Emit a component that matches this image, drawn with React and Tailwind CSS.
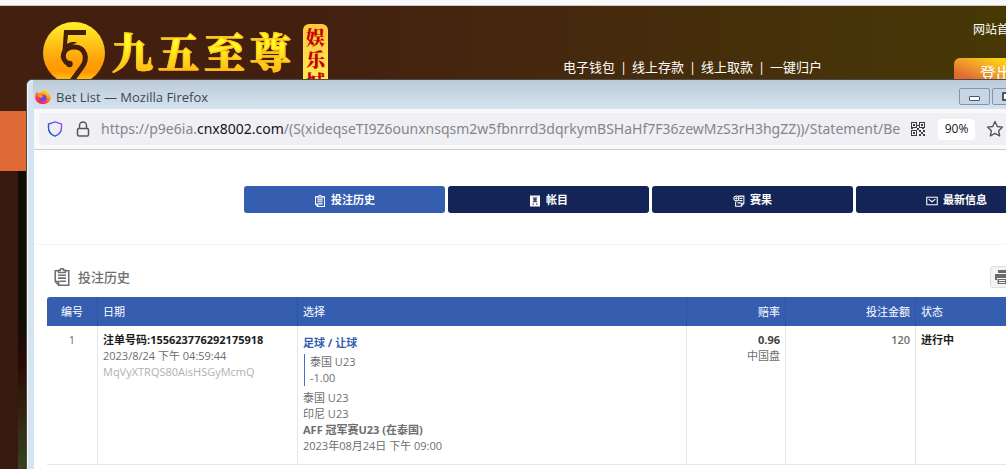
import React from "react";

const navTabs = [
    { label: "投注历史", icon: "clipboard", active: true },
    { label: "帐目", icon: "book" },
    { label: "赛果", icon: "result" },
    { label: "最新信息", icon: "mail" },
];

const bets = [
    {
        no: 1,
        ticket: "注单号码:155623776292175918",
        time: "2023/8/24 下午 04:59:44",
        code: "MqVyXTRQS80AisHSGyMcmQ",
        type: "足球 / 让球",
        pick: "泰国 U23",
        handicap: "-1.00",
        home: "泰国 U23",
        away: "印尼 U23",
        league: "AFF 冠军赛U23 (在泰国)",
        kickoff: "2023年08月24日 下午 09:00",
        odds: "0.96",
        oddsType: "中国盘",
        stake: "120",
        status: "进行中",
    },
];

// gold circle with the 5 and the 9 interlocked
function LogoMark() {
    return (
        <svg viewBox="0 0 64 64" className="w-16 h-16 shrink-0" aria-hidden="true">
            <defs>
                <linearGradient id="gold" x1="0" y1="0" x2="0" y2="1">
                    <stop offset="0" stopColor="#fff22a" />
                    <stop offset="0.6" stopColor="#ffa30a" />
                    <stop offset="0.8" stopColor="#ff9800" />
                    <stop offset="1" stopColor="#ffd820" />
                </linearGradient>
            </defs>
            <circle cx="32" cy="32" r="31" fill="url(#gold)" />
            <path d="M22 9H44V14H26L25 23C28 21 32 20.500 35 21.500L30 24C26 24.500 23 27 20.500 30Z" fill="#431f10" />
            <path d="M27 43C17 38 21 26 32 26C44 26 46 38 40 46L29 61" fill="none" stroke="#431f10" strokeWidth="5" />
            <circle cx="27.500" cy="43" r="3.200" fill="#431f10" />
        </svg>
    );
}

function FirefoxIcon() {
    return (
        <svg viewBox="0 0 16 16" className="w-4 h-4 mt-1 shrink-0" aria-hidden="true">
            <defs>
                <linearGradient id="fox" x1="0.8" y1="0" x2="0.2" y2="1">
                    <stop offset="0" stopColor="#fff44f" />
                    <stop offset="0.4" stopColor="#ff980e" />
                    <stop offset="0.75" stopColor="#ff3647" />
                    <stop offset="1" stopColor="#e31587" />
                </linearGradient>
            </defs>
            <path d="M10 0C12 1.500 13 3 13.500 4.500C15 5.500 16 8 15.600 10A8 7.500 0 0 1 0.400 10C0 7 0.500 4.500 2 2.500L3 4.500C4 3.800 5 3.500 6 3.600C7 1.500 9 2 10 0Z" fill="url(#fox)" />
            <circle cx="8" cy="9" r="3.600" fill="#7542e5" />
            <path d="M3 5.500C5 4.500 6 5 7 6.500H9C8 8 6.500 7.500 6.500 9C5 9 3.500 8 3 5.500Z" fill="#ff980e" />
        </svg>
    );
}

function Icon({ name, className }) {
    return (
        <svg viewBox="0 0 16 16" className={className} fill="none" stroke="currentColor" strokeWidth="1.4" aria-hidden="true">
            {name === "clipboard" && (
                <>
                    <path d="M4.500 2.500H2V12L5 15.300H14V2.500H11.500" />
                    <path d="M5 2H6.500L7 0.700H9L9.500 2H11V4H5Z" />
                    <path d="M4.500 6.500H11.500M4.500 9H11.500M6 11.800H11.500M2.500 12H5V15" />
                </>
            )}
            {name === "book" && (
                <>
                    <path d="M2 1.500H14V14.500H2Z" fill="currentColor" />
                    <path d="M5 4H11M8 4V8M5.500 6.500H10.500M5 9H11M6 11.500L5 13M10 11.500L11 13" stroke="#142456" />
                </>
            )}
            {name === "result" && (
                <>
                    <path d="M7 1.500H14.500V11L11 15H3.500V9" />
                    <circle cx="4.500" cy="4.500" r="3.300" />
                    <path d="M9 4.500H12.500M8.500 7.500H12.500M6 10.500H10M11 15V11H14.500M3 4.500H6M4.500 3V6" />
                </>
            )}
            {name === "mail" && (
                <>
                    <path d="M1 3H15V13H1Z" />
                    <path d="M3.500 5.500L8 9L12.500 5.500" />
                </>
            )}
        </svg>
    );
}

function QrIcon() {
    return (
        <svg viewBox="0 0 14 14" className="w-[14px] h-[14px] shrink-0" fill="#3b3b43" aria-hidden="true">
            <path fillRule="evenodd" d="M0 0H6V6H0ZM1 1V5H5V1ZM8 0H14V6H8ZM9 1V5H13V1ZM0 8H6V14H0ZM1 9V13H5V9Z" />
            <path d="M2 2H4V4H2ZM10 2H12V4H10ZM2 10H4V12H2ZM8 8H10V10H8ZM12 8H14V10H12ZM10 10H12V12H10ZM8 12H10V14H8ZM12 12H14V14H12ZM6 3H8V4H6ZM6 6H8V8H6ZM0 6H2V7H0ZM11 6H13V7H11Z" />
        </svg>
    );
}

function SiteHeader() {
    const links = ["电子钱包", "线上存款", "线上取款", "一键归户"];
    return (
        <header className="h-[105px] flex items-start pl-[42px] text-white bg-linear-to-r from-[#431f10] from-30% to-[#473805]">
            <div className="flex pt-[15px]">
                <LogoMark />
                <h1 className="flex gap-[5px] ml-[6px] mt-[7px] text-[41px] leading-[46px] font-black font-['Noto_Serif_CJK_SC','Noto_Sans_CJK_SC',sans-serif] [-webkit-text-stroke:1px_#ffc01a] bg-linear-to-b from-[#ffff25] from-20% to-[#ff9000] to-80% bg-clip-text text-transparent">
                    {"九五至尊".split("").map((c) => <span key={c}>{c}</span>)}
                </h1>
                <div className="w-[25px] ml-3 mt-[3px] h-20 pt-[2px] rounded-md text-center text-[19px] leading-[22px] font-black font-['Noto_Serif_CJK_SC','Noto_Sans_CJK_SC',sans-serif] text-[#c40000] bg-linear-to-b from-[#ffc83c] to-[#fff860]">
                    娱乐城
                </div>
            </div>
            <nav className="ml-auto mr-[132px] mt-[52px] flex text-[13px] leading-[18px]">
                {links.map((link, i) => (
                    <React.Fragment key={link}>
                        {i > 0 && <span className="w-[17px] text-center">|</span>}
                        <a href="#" className="whitespace-nowrap">{link}</a>
                    </React.Fragment>
                ))}
            </nav>
            <div className="-mr-7 mt-[15px] flex flex-col items-start gap-[19px]">
                <a href="#" className="ml-[19px] text-[12px] leading-[18px] whitespace-nowrap">网站首页</a>
                <button className="w-20 h-[30px] pl-1 rounded-md text-[16px] whitespace-nowrap bg-linear-to-tr from-[#e06a32] from-25% to-[#fbd010] to-75%">登出</button>
            </div>
        </header>
    );
}

function TitleBar() {
    return (
        <div className="h-[29px] flex items-center pl-[2px] bg-linear-to-b from-[#bccad8] to-[#d6e4f0]">
            <FirefoxIcon />
            <span className="ml-[5px] mt-1 text-[13px] leading-4 text-[#40474f]">Bet List — Mozilla Firefox</span>
            <div className="ml-auto mt-1 flex gap-[2px] shrink-0 -mr-[17px]">
                <button aria-label="Minimize" className="w-[31px] h-[17px] border border-[#8394b0] rounded-[2px] bg-[#c7d5e5] flex items-center justify-center">
                    <span className="w-[11px] h-[5px] mt-[3px] bg-white border border-[#4d5361] rounded-[1px]"></span>
                </button>
                <button aria-label="Maximize" className="w-[31px] h-[17px] border border-[#8394b0] rounded-[2px] bg-[#c7d5e5] flex items-center justify-center">
                    <span className="w-[11px] h-[9px] bg-white border-2 border-[#4d5361] rounded-[1px]"></span>
                </button>
            </div>
        </div>
    );
}

function AddressBar() {
    return (
        <div className="h-[41px] pl-[5px] py-1 bg-[#f9f9fb] border-b border-[#cccccc]">
            <div className="h-8 flex items-center pl-2 rounded-l bg-[#f0f0f4]">
                <svg viewBox="0 0 16 16" className="w-4 h-4 shrink-0" fill="none" strokeWidth="1.4" aria-hidden="true">
                    <defs>
                        <linearGradient id="shield" x1="1" y1="0" x2="0" y2="1">
                            <stop offset="0" stopColor="#9059ff" />
                            <stop offset="1" stopColor="#0250bb" />
                        </linearGradient>
                    </defs>
                    <path d="M8 0.900L14.500 3V6.500C14.500 10.500 12 13.800 8 15.200C4 13.800 1.500 10.500 1.500 6.500V3Z" stroke="url(#shield)" />
                </svg>
                <svg viewBox="0 0 14 16" className="w-[14px] h-4 ml-[13px] shrink-0" fill="none" stroke="#55555e" strokeWidth="1.5" aria-hidden="true">
                    <rect x="1.500" y="7.500" width="11" height="7.500" rx="1.500" />
                    <path d="M3.500 7.500V4.500A3.500 3.500 0 0 1 10.500 4.500V7.500" />
                </svg>
                <div className="ml-[11px] flex-1 min-w-0 overflow-hidden whitespace-nowrap font-['Noto_Sans',sans-serif] text-[14px] leading-5 text-[#85858c]">
                    https://p9e6ia.<span className="text-[#15141a]">cnx8002.com</span>/(S(xideqseTI9Z6ounxnsqsm2w5fbnrrd3dqrkymBSHaHf7F36zewMzS3rH3hgZZ))/Statement/Be
                </div>
                <div className="flex items-center shrink-0 pl-[7px]">
                    <QrIcon />
                    <button className="ml-[13px] w-[37px] h-[21px] rounded bg-white text-[12px] text-[#15141a]">90%</button>
                    <svg viewBox="0 0 18 18" className="w-[18px] h-[18px] ml-[11px] mr-[2px]" fill="none" stroke="#55555e" strokeWidth="1.4" strokeLinejoin="round" aria-hidden="true">
                        <path d="M9 1.500L11.300 6.500L16.500 7.100L12.600 10.700L13.700 16L9 13.300L4.300 16L5.400 10.700L1.500 7.100L6.700 6.500Z" />
                    </svg>
                </div>
            </div>
        </div>
    );
}

function BetTable() {
    const th = "h-[29px] px-[5px] font-normal border-r border-[#2e55a3]";
    const td = "px-[5px] pt-[6px] pb-[10px] align-top border-r border-b border-[#e6e6e6]";
    return (
        <table className="w-full table-fixed border-separate border-spacing-0 text-[11px] leading-4 text-[#6e6e6e]">
            <colgroup>
                <col className="w-[51px]" />
                <col className="w-[200px]" />
                <col />
                <col className="w-[99px]" />
                <col className="w-[130px]" />
                <col className="w-[102px]" />
            </colgroup>
            <thead>
                <tr className="bg-[#355eb1] text-white text-left">
                    <th className={`${th} rounded-tl-[3px] text-center`}>编号</th>
                    <th className={th}>日期</th>
                    <th className={th}>选择</th>
                    <th className={`${th} text-right`}>赔率</th>
                    <th className={`${th} text-right`}>投注金额</th>
                    <th className={th}>状态</th>
                </tr>
            </thead>
            <tbody>
                {bets.map((bet) => (
                    <tr key={bet.no}>
                        <td className={`${td} text-center`}>{bet.no}</td>
                        <td className={td}>
                            <div className="font-bold text-[#1c1c1c]">{bet.ticket}</div>
                            <div>{bet.time}</div>
                            <div className="text-[#b0b0b0]">{bet.code}</div>
                        </td>
                        <td className={td}>
                            <div className="mt-[3px] font-bold text-[#355eb1]">{bet.type}</div>
                            <div className="mt-[3px] mb-1 pl-[5px] ml-px border-l border-[#3f6fd0]">
                                <div>{bet.pick}</div>
                                <div>{bet.handicap}</div>
                            </div>
                            <div>{bet.home}</div>
                            <div>{bet.away}</div>
                            <div className="font-bold">{bet.league}</div>
                            <div>{bet.kickoff}</div>
                        </td>
                        <td className={`${td} text-right`}>
                            <div className="font-bold text-[#444444]">{bet.odds}</div>
                            <div>{bet.oddsType}</div>
                        </td>
                        <td className={`${td} text-right font-semibold`}>{bet.stake}</td>
                        <td className={`${td} font-bold text-[#1c1c1c]`}>{bet.status}</td>
                    </tr>
                ))}
            </tbody>
        </table>
    );
}

function BetListPage() {
    return (
        <main className="flex-1 bg-white overflow-hidden">
            <nav className="flex gap-[3px] pl-[210px] pt-9 pb-[31px] border-b border-[#f5f5f5]">
                {navTabs.map((tab) => (
                    <button
                        key={tab.label}
                        className={`w-[201px] h-[27px] pt-[2px] shrink-0 flex items-center justify-center gap-[5px] rounded-[3px] text-[11px] font-bold text-white ${tab.active ? "bg-[#355eb1]" : "bg-[#142456]"}`}
                    >
                        <Icon name={tab.icon} className="w-3 h-3" />
                        {tab.label}
                    </button>
                ))}
            </nav>
            <section className="pl-[13px] -mr-3 pt-[21px]">
                <div className="flex items-center h-[22px] mb-[9px] text-[#6e6e6e]">
                    <Icon name="clipboard" className="w-[18px] h-[18px] ml-[6px]" />
                    <h2 className="ml-[7px] text-[13px] leading-5 font-medium">投注历史</h2>
                    <button aria-label="打印" className="ml-auto w-7 h-[22px] pl-1 border border-[#dddddd] rounded-[3px] bg-[#f3f3f3]">
                        <svg viewBox="0 0 14 14" className="w-[14px] h-[14px]" fill="#6a6a6a" aria-hidden="true">
                            <path d="M3 0H11V3H3ZM0 4H14V10H12V8H2V10H0Z" />
                            <path fillRule="evenodd" d="M2.500 9H11.500V14H2.500ZM4 10V11H10V10ZM4 12V13H10V12Z" />
                        </svg>
                    </button>
                </div>
                <BetTable />
            </section>
        </main>
    );
}

function App() {
    return (
        <div className="relative min-h-screen overflow-hidden flex flex-col bg-[#f9f9fb] pt-[5px] font-['Open_Sans','Noto_Sans_CJK_SC',sans-serif]">
            <div className="border-t border-[#cccccc]">
                <SiteHeader />
            </div>
            <div className="h-[60px] bg-[#e06a36]"></div>
            <div className="flex-1 flex bg-[#38190f]">
                <div className="w-[18px]"></div>
                <div className="flex-1 bg-linear-to-b from-[#120c07] from-50% via-[#2a0a05] via-65% to-[#33431f]"></div>
            </div>

            {/* browser window on top of the site */}
            <div className="absolute left-[26px] top-[79px] right-0 bottom-0 flex flex-col pl-[6px] border-l border-t border-[#4a4a4a] rounded-tl-md overflow-hidden bg-[#d6e4f0] shadow-[inset_1px_1px_0_#f4f8fc]">
                <TitleBar />
                <div className="flex-1 flex flex-col ml-px">
                    <AddressBar />
                    <BetListPage />
                </div>
            </div>
        </div>
    );
}

export default App;
